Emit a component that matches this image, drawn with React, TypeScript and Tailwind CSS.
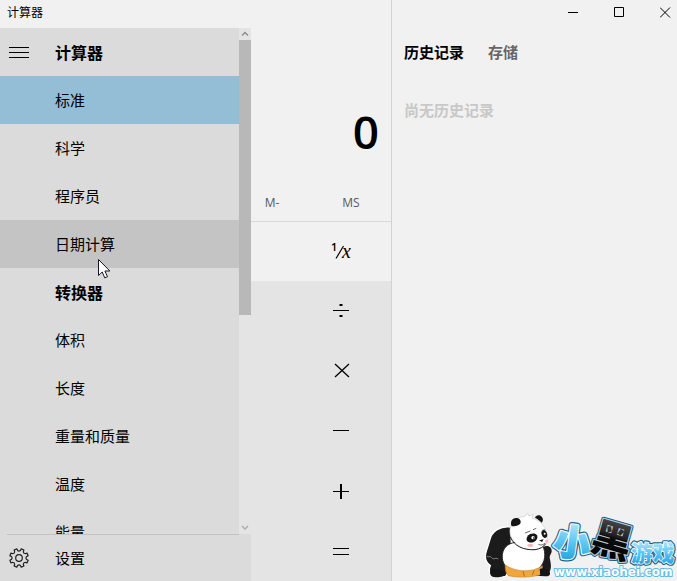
import type { ReactNode } from "react";

type NavEntry = {
  label: string;
  heading?: boolean;
  selected?: boolean;
  hovered?: boolean;
};

const navEntries: NavEntry[] = [
  { label: "标准", selected: true },
  { label: "科学" },
  { label: "程序员" },
  { label: "日期计算", hovered: true },
  { label: "转换器", heading: true },
  { label: "体积" },
  { label: "长度" },
  { label: "重量和质量" },
  { label: "温度" },
  { label: "能量" },
];

const operators: { name: string; path: string }[] = [
  { name: "除以", path: "M3 11.5h16" },
  { name: "乘以", path: "M5 5l14 13M19 5L5 18" },
  { name: "减", path: "M3 11.5h16" },
  { name: "加", path: "M3 12.5h16M10.5 5v15M11.5 5v15" },
  { name: "等于", path: "M3 9.5h16M3 15.5h16" },
];

// Eight teeth with rounded valleys between them
const gearPath = () => {
  const point = (r: number, deg: number) => {
    const a = (deg * Math.PI) / 180;
    return `${(10 + r * Math.cos(a)).toFixed(2)} ${(10 + r * Math.sin(a)).toFixed(2)}`;
  };
  let d = "";
  for (let i = 0; i < 8; i++) {
    const a = i * 45 + 22.5;
    d += `${i ? "L" : "M"}${point(9.4, a - 9)}L${point(9.4, a + 9)}L${point(7.6, a + 12)}Q${point(6.2, a + 22.5)} ${point(7.6, a + 33)}`;
  }
  return d + "Z";
};

const WindowButton = ({ label, path }: { label: string; path: string }) => (
  <button type="button" aria-label={label} className="flex items-center">
    <svg width="11" height="11" viewBox="0 0 11 11" fill="none" stroke="#000">
      <path d={path} />
    </svg>
  </button>
);

const Cursor = () => (
  <svg
    width="13"
    height="20"
    viewBox="0 0 13 20"
    className="absolute left-[98px] top-[39px] z-10"
  >
    <path
      d="M.5 .5v16l3.700-3.500 2.600 5.900 2.700-1.200-2.600-5.700h5z"
      fill="#fff"
      stroke="#15152a"
    />
  </svg>
);

const NavItem = ({ entry }: { entry: NavEntry }) => {
  if (entry.heading) {
    return (
      <h2 className="flex h-12 shrink-0 items-center pl-[55px] text-[16px] font-bold">
        {entry.label}
      </h2>
    );
  }
  let background = "";
  if (entry.selected) background = "bg-[#94bdd6]";
  if (entry.hovered) background = "bg-[#c4c4c4]";
  return (
    <div className={`relative h-12 shrink-0 ${background}`}>
      <button type="button" className="flex h-full w-full items-center pl-[55px] text-[15px]">
        {entry.label}
      </button>
      {entry.hovered && <Cursor />}
    </div>
  );
};

const ScrollBar = () => (
  <div className="flex w-3 shrink-0 flex-col bg-[#e4e4e4]">
    <svg width="12" height="12" viewBox="0 0 12 12" fill="none" stroke="#888" strokeWidth="1.3">
      <path d="M3 7.500l3-3 3 3" />
    </svg>
    <div className="h-[275px] shrink bg-[#b8b8b8]" />
    <svg
      width="12"
      height="12"
      viewBox="0 0 12 12"
      fill="none"
      stroke="#aaa"
      strokeWidth="1.3"
      className="mt-auto"
    >
      <path d="M3 4l3 3 3-3" />
    </svg>
  </div>
);

const Navigation = () => (
  <nav className="flex w-[251px] shrink-0 flex-col bg-[#dbdbdb]">
    <div className="flex min-h-0 flex-1">
      <div className="flex min-w-0 flex-1 flex-col overflow-hidden">
        <div className="flex h-12 shrink-0 items-center">
          <button type="button" aria-label="菜单" className="ml-[9px] mr-[26px]">
            <svg width="20" height="20" viewBox="0 0 20 20" stroke="#000">
              <path d="M0 5.500h20M0 10.500h20M0 15.500h20" />
            </svg>
          </button>
          <h1 className="text-[16px] font-bold">计算器</h1>
        </div>
        {navEntries.map((entry) => (
          <NavItem key={entry.label} entry={entry} />
        ))}
      </div>
      <ScrollBar />
    </div>
    <div className="ml-[7px] mr-3 h-px bg-[#c2c2c2]" />
    <button type="button" className="flex h-[46px] shrink-0 items-center pl-[9px] text-[15px]">
      <svg width="20" height="20" viewBox="0 0 20 20" fill="none" stroke="#222" strokeWidth="1.2">
        <path d={gearPath()} strokeLinejoin="round" />
        <circle cx="10" cy="10" r="3.300" />
      </svg>
      <span className="ml-[26px]">设置</span>
    </button>
  </nav>
);

const Key = ({ label, children }: { label: string; children: ReactNode }) => (
  <button
    type="button"
    aria-label={label}
    className="flex w-[98px] flex-1 items-center justify-center self-end"
  >
    {children}
  </button>
);

const Keypad = () => (
  <div className="flex min-w-0 flex-1 flex-col overflow-hidden">
    <output className="mt-[71px] block pr-3 text-right font-['Open_Sans'] text-[46px] font-semibold leading-[64px]">
      0
    </output>
    <div className="mt-[22px] flex h-[37px] justify-end border-b border-[#d8d8d8] font-['Open_Sans'] text-[12px] font-medium text-[#5a5a5a]">
      <button type="button" className="w-[78px] shrink-0">M-</button>
      <button type="button" className="w-20 shrink-0">MS</button>
    </div>
    <div className="flex h-[59px] flex-col">
      <Key label="倒数">
        <svg width="24" height="24" viewBox="0 0 24 24">
          <text x="1" y="11" fontSize="11" fontFamily="Open Sans" fontWeight="600">1</text>
          <path d="M6 18.500L13.500 6" stroke="#000" strokeWidth="1.200" />
          <text x="12" y="18" fontSize="20" fontFamily="Liberation Serif" fontStyle="italic">x</text>
        </svg>
      </Key>
    </div>
    <div className="flex flex-1 flex-col bg-[#e4e4e4]">
      {operators.map((op) => (
        <Key key={op.name} label={op.name}>
          <svg
            width="24"
            height="24"
            viewBox="0 0 24 24"
            fill="none"
            stroke="#000"
            strokeWidth={op.name === "乘以" ? 1.3 : 1}
          >
            <path d={op.path} />
            {op.name === "除以" && <path d="M9.500 6h3M9.500 17h3" strokeWidth="2" />}
          </svg>
        </Key>
      ))}
    </div>
  </div>
);

const HistoryPanel = () => (
  <section className="flex w-[285px] shrink-0 flex-col">
    <div className="flex h-6 justify-end gap-[35px] pr-[6px]">
      <WindowButton label="最小化" path="M0 5.500h10" />
      <WindowButton label="最大化" path="M.5 .5h9v9h-9z" />
      <WindowButton label="关闭" path="M0 .5l10 10M10 .5l-10 10" />
    </div>
    <div role="tablist" className="mt-4 flex h-6 gap-6 pl-3 text-[15px] font-bold">
      <button type="button" role="tab" aria-selected="true">历史记录</button>
      <button type="button" role="tab" aria-selected="false" className="text-[#666]">存储</button>
    </div>
    <p className="mt-[34px] pl-3 text-[15px] font-bold leading-6 text-[#c8c8c8]">尚无历史记录</p>
  </section>
);

const PandaLogo = () => (
  <svg
    width="200"
    height="76"
    viewBox="0 0 600 228"
    className="pointer-events-none absolute bottom-0 right-0"
    role="img"
    aria-label="小黑游戏"
  >
    <defs>
      <linearGradient id="sky" x1="0" y1="0" x2="0" y2="1">
        <stop offset="0.150" stopColor="#b4e8fb" />
        <stop offset="0.550" stopColor="#5cc6f2" />
        <stop offset="1" stopColor="#189bdc" />
      </linearGradient>
      <linearGradient id="coal" x1="0" y1="0" x2="0" y2="1">
        <stop offset="0.100" stopColor="#555" />
        <stop offset="0.450" stopColor="#222" />
        <stop offset="0.500" stopColor="#0c0c0c" />
        <stop offset="1" stopColor="#000" />
      </linearGradient>
    </defs>

    {/* panda */}
    <path
      d="M102 66C70 62 44 78 38 106c-4 14-6 20-10 32-6 18-2 34 12 44 -6 12-4 30 14 34l32-2 18-30z"
      fill="#1b1b1b"
      stroke="#fff"
      strokeWidth="4"
    />
    <path d="M28 152c6 8 10-2 16 6s10-2 20 4" fill="none" stroke="#888" strokeWidth="3" />
    <path d="M198 126c14-8 28 0 26 14-2 8-6 10-6 18 4 18 6 30 0 42 4 12-4 14-14 14l-28-2z" fill="#1b1b1b" />
    <path
      d="M76 148c4-26 24-36 46-36h66c16 12 20 42 10 62-8 16-26 30-58 32-40 0-68-24-64-58z"
      fill="#fff"
      stroke="#222"
      strokeWidth="3"
    />
    <path
      d="M85 180c30 22 82 24 111 2 0 14-2 24-8 28-32 8-66 8-94 2-8-8-10-20-9-32z"
      fill="#f0a63a"
      stroke="#c98a30"
      strokeWidth="2"
    />
    <path d="M142 214l-4-16M166 210l6-14" stroke="#8d5a13" strokeWidth="2" />
    <path d="M42 196c12-8 38-2 42 10 0 10-20 12-34 10-10-2-14-12-8-20zM188 192c14-6 28 2 30 12 0 10-12 10-28 8z" fill="#151515" />
    <path
      d="M100 90c-6-30 10-54 44-56l8-10 4 10 12-6-2 12c26 6 44 30 44 56 4 22-14 36-34 38-36 2-64-12-76-44z"
      fill="#fff"
      stroke="#ccc"
      strokeWidth="2"
    />
    <path d="M100 96c12 28 40 40 74 38 14-2 26-8 32-18" fill="none" stroke="#222" strokeWidth="3" />
    <path d="M104 64c-6-14 2-26 14-25 8 0 14 6 13 14-4 10-18 10-27 11z" fill="#151515" />
    <path d="M174 38c2-8 14-10 20-3 6 6 4 14 0 18-6-6-12-12-20-15z" fill="#151515" />
    <ellipse cx="165" cy="99" rx="17" ry="13" transform="rotate(-25 165 99)" fill="#151515" />
    <ellipse cx="202" cy="87" rx="8" ry="12" transform="rotate(-20 202 87)" fill="#151515" />
    <circle cx="168" cy="98" r="5" fill="#fff" />
    <circle cx="203" cy="86" r="3" fill="#fff" />
    <circle cx="170" cy="99" r="2" fill="#000" />
    <path d="M186 106l14-3-5 8z" fill="#111" />
    <path d="M184 118c8 4 14 2 20-4M144 84l16-6M196 76l8-2M168 74l10-4" stroke="#222" strokeWidth="2" fill="none" />
    <ellipse cx="160" cy="121" rx="9" ry="5" fill="#f9b8bd" />
    <ellipse cx="209" cy="109" rx="5" ry="5" fill="#f9b8bd" />

    {/* wordmark: dark rim, light rim, then the glyphs themselves */}
    <g
      fontFamily="Noto Sans CJK SC, sans-serif"
      fontWeight="900"
      strokeLinejoin="round"
    >
      <g stroke="#1d6087">
        <use href="#logo-small" strokeWidth="19" />
        <use href="#logo-black" strokeWidth="13" />
        <use href="#logo-game" strokeWidth="12" />
      </g>
      <g stroke="#f2fbff">
        <use href="#logo-small" strokeWidth="12" />
        <use href="#logo-game" strokeWidth="5" />
      </g>
      <use href="#logo-black" stroke="#b9cbd4" strokeWidth="7" />
      <g fill="url(#sky)" stroke="url(#sky)" strokeWidth="5">
        <text id="logo-small" x="232" y="151" fontSize="108" transform="rotate(8 280 110)">
          小
        </text>
      </g>
      <g fill="url(#coal)">
        <text id="logo-black" x="346" y="150" fontSize="120" transform="rotate(16 405 105)">
          黑
        </text>
      </g>
      <g fill="url(#sky)">
        <text id="logo-game" x="462" y="168" fontSize="65">
          游戏
        </text>
      </g>
    </g>
    <text
      x="231"
      y="213"
      fontSize="36"
      fontFamily="DejaVu Sans, sans-serif"
      fontWeight="700"
      fill="#fff"
      stroke="#5fbbe4"
      strokeWidth="6"
      strokeLinejoin="round"
      paintOrder="stroke"
    >
      www.xiaohei.com
    </text>
  </svg>
);

export default function App() {
  return (
    <main
      lang="zh-CN"
      className="relative flex h-screen overflow-hidden bg-[#f1f1f1] font-['Noto_Sans_CJK_SC',sans-serif] text-black"
    >
      <div className="flex min-w-0 flex-1 flex-col border-r border-[#d2d2d2]">
        <header className="mb-1 flex h-6 shrink-0 items-center pl-[7px] text-[12px]">计算器</header>
        <div className="flex min-h-0 flex-1">
          <Navigation />
          <Keypad />
        </div>
      </div>
      <HistoryPanel />
      <PandaLogo />
    </main>
  );
}
